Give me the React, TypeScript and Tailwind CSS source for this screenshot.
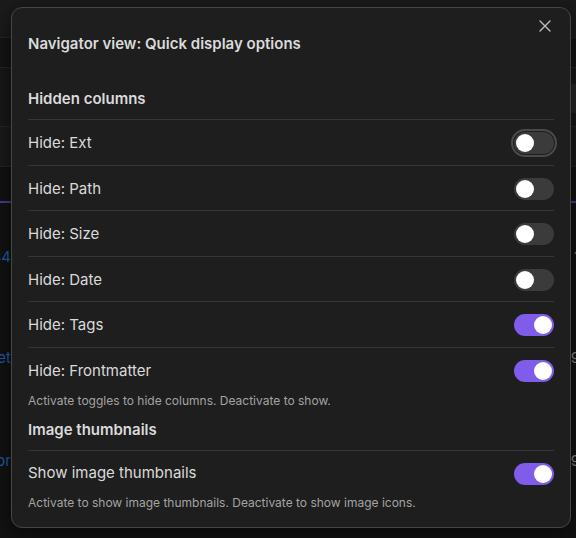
import React from "react";

function Toggle({ on, focus }: { on: boolean; focus?: boolean }) {
  return (
    <div
      className={
        "relative w-[40px] h-[22px] rounded-full flex items-center px-[2px] " +
        (on ? "bg-[#7f5ce9] justify-end" : "bg-[#3b3b3b] justify-start") +
        (focus ? " outline outline-[2px] outline-offset-[1px] outline-[#4a4a4a]" : "")
      }
    >
      <div className="w-[18px] h-[18px] rounded-full bg-white" />
    </div>
  );
}

function Row({ label, on, focus, h = "h-[45.5px]" }: { label: string; on: boolean; focus?: boolean; h?: string }) {
  return (
    <div className={"border-t border-[#363636] pt-[2px] flex items-center justify-between " + h}>
      <span className="text-[15px] text-[#dadada]">{label}</span>
      <Toggle on={on} focus={focus} />
    </div>
  );
}

export default function App() {
  const font = { fontFamily: "Inter, 'Noto Sans', sans-serif" };
  return (
    <div className="relative w-[576px] h-[538px] overflow-hidden bg-[#121212]" style={font}>
      {/* background page */}
      <div className="flex flex-col w-full">
        <div className="h-[38px] bg-[#1b1b1b] border-b border-[#262626]" />
        <div className="h-[30px] bg-[#141414] border-b border-[#262626]" />
        <div className="h-[59px] bg-[#181818] border-b border-[#262626] flex justify-end items-start pt-[16px]">
          <div className="w-[8px] h-[29px] bg-[#262626] rounded-l-[4px]" />
        </div>
        <div className="h-[40px] bg-[#1a1a1a] border-b border-[#262626]" />
        <div className="h-[36px] bg-[#121212] border-b-[2px] border-[#4b3a95]" />
        <div className="flex flex-col">
          {[
            ["1234", "1", "mt-[44px]"],
            ["et", "9", "mt-[81px]"],
            ["or", "9", "mt-[83px]"],
          ].map(([l, r, m]) => (
            <div key={l} className={"flex justify-between items-center h-[20px] " + m}>
              <div className="w-[11px] overflow-hidden flex justify-end">
                <span className="text-[15px] text-[#1d5fae] whitespace-nowrap">{l}</span>
              </div>
              <span className="text-[15px] text-[#8a8a8a] mr-[-4px]">{r}</span>
            </div>
          ))}
        </div>
      </div>

      {/* dialog */}
      <div className="absolute left-[11px] top-[7px] w-[560px] h-[521px] rounded-[11px] border border-[#464646] bg-[#1e1e1e] px-[16px] shadow-[0_4px_20px_rgba(0,0,0,0.6)]">
        <button className="absolute right-[18px] top-[11px] w-[14px] h-[14px] flex items-center justify-center text-[#bdbdbd]">
          <svg width="12" height="12" viewBox="0 0 12 12" fill="none" stroke="currentColor" strokeWidth="1.4" strokeLinecap="round">
            <path d="M1 1L11 11M11 1L1 11" />
          </svg>
        </button>
        <div className="mt-[26px] h-[20px] leading-[20px] text-[15px] font-semibold text-[#dadada]">
          Navigator view: Quick display options
        </div>
        <div className="mt-[35px] h-[20px] leading-[20px] text-[15px] font-semibold text-[#dadada] mb-[10px]">
          Hidden columns
        </div>
        <Row label="Hide: Ext" on={false} focus />
        <Row label="Hide: Path" on={false} />
        <Row label="Hide: Size" on={false} />
        <Row label="Hide: Date" on={false} />
        <Row label="Hide: Tags" on={true} />
        <Row label="Hide: Frontmatter" on={true} h="h-[46px]" />
        <div className="h-[16px] leading-[16px] text-[12px] text-[#a3a3a3]">
          Activate toggles to hide columns. Deactivate to show.
        </div>
        <div className="mt-[11px] h-[20px] leading-[20px] text-[15px] font-semibold text-[#dadada] mb-[10px]">
          Image thumbnails
        </div>
        <Row label="Show image thumbnails" on={true} h="h-[45px]" />
        <div className="h-[16px] leading-[16px] text-[12px] text-[#a3a3a3]">
          Activate to show image thumbnails. Deactivate to show image icons.
        </div>
      </div>
    </div>
  );
}
